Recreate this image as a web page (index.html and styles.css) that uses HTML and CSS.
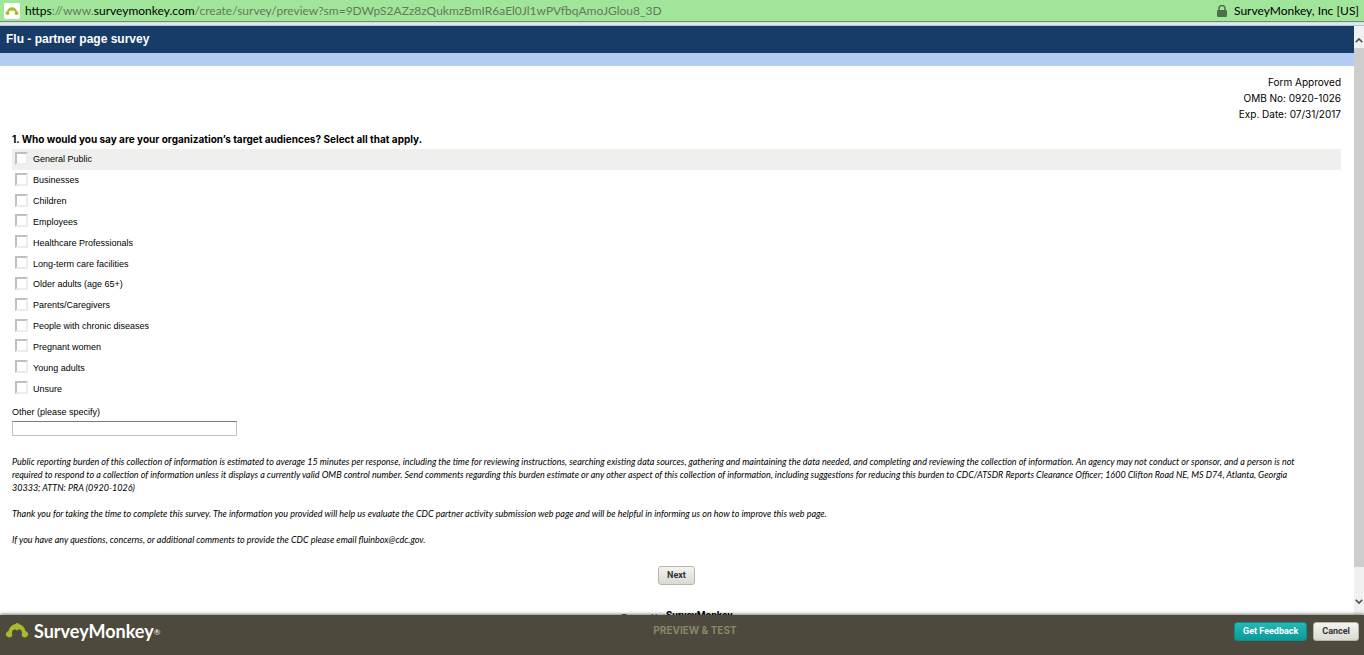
FILE: index.html
```html
<!DOCTYPE html>
<html lang="en">
<head>
    <meta charset="UTF-8">
    <meta name="viewport" content="width=device-width, initial-scale=1">
    <title>Flu - partner page survey</title>
    <link rel="stylesheet" href="styles.css">
</head>
<body>
<div class="address-bar">
    <span class="favicon">
        <svg viewBox="0 0 24 17" width="14" height="10"><path d="M3.500 9C4.500 4.500 8 2 12 2s7.500 2.500 8.500 7a3.300 3.300 0 1 1-3.500 5c-.6-1 0-1.800 0-3 0-2-1-3.500-2.700-3.500-1.100 0-1.800.5-2.300 1.300-.5-.8-1.200-1.300-2.300-1.300C8 7.500 7 9 7 11c0 1.200.6 2 0 3a3.300 3.300 0 1 1-3.500-5z" fill="#a5bd2c"/></svg>
    </span>
    <span class="url"><b>https</b>://www.<b>surveymonkey.com</b>/create/survey/preview?sm=9DWpS2AZz8zQukmzBmIR6aEl0Jl1wPVfbqAmoJGlou8_3D</span>
    <svg class="lock" viewBox="0 0 10 12" width="10" height="12"><path d="M2 6V3.500a3 3 0 0 1 6 0V6" fill="none" stroke="#4c7048" stroke-width="1.500"/><rect y="5" width="10" height="7" rx="1" fill="#4c7048"/></svg>
    <span class="owner">SurveyMonkey, Inc [US]</span>
</div>
<div class="viewport">
    <main class="page">
        <h1 class="survey-title">Flu - partner page survey</h1>
        <div class="band"></div>
        <form class="survey">
            <p class="approval">Form Approved<br>OMB No: 0920-1026<br>Exp. Date: 07/31/2017</p>
            <h2 class="question" id="q1">1. Who would you say are your organization’s target audiences? Select all that apply.</h2>
            <div class="options" role="group" aria-labelledby="q1">
                <label class="option active"><input type="checkbox">General Public</label>
                <label class="option"><input type="checkbox">Businesses</label>
                <label class="option"><input type="checkbox">Children</label>
                <label class="option"><input type="checkbox">Employees</label>
                <label class="option"><input type="checkbox">Healthcare Professionals</label>
                <label class="option"><input type="checkbox">Long-term care facilities</label>
                <label class="option"><input type="checkbox">Older adults (age 65+)</label>
                <label class="option"><input type="checkbox">Parents/Caregivers</label>
                <label class="option"><input type="checkbox">People with chronic diseases</label>
                <label class="option"><input type="checkbox">Pregnant women</label>
                <label class="option"><input type="checkbox">Young adults</label>
                <label class="option"><input type="checkbox">Unsure</label>
            </div>
            <label class="other-label" for="other">Other (please specify)</label>
            <input class="other" type="text" id="other">
            <div class="notice">
                <p>Public reporting burden of this collection of information is estimated to average 15 minutes per response, including the time for reviewing instructions, searching existing data sources, gathering and maintaining the data needed, and completing and reviewing the collection of information. An agency may not conduct or sponsor, and a person is not<br>required to respond to a collection of information unless it displays a currently valid OMB control number. Send comments regarding this burden estimate or any other aspect of this collection of information, including suggestions for reducing this burden to CDC/ATSDR Reports Clearance Officer; 1600 Clifton Road NE, MS D74, Atlanta, Georgia<br>30333; ATTN: PRA (0920-1026)</p>
                <p>Thank you for taking the time to complete this survey. The information you provided will help us evaluate the CDC partner activity submission web page and will be helpful in informing us on how to improve this web page.</p>
                <p>If you have any questions, concerns, or additional comments to provide the CDC please email fluinbox@cdc.gov.</p>
            </div>
            <button class="btn next" type="button">Next</button>
        </form>
        <p class="powered">Powered by <b>SurveyMonkey</b></p>
    </main>
    <div class="scrollbar">
        <svg viewBox="0 0 10 6" width="8" height="5"><path d="M1 5L5 1L9 5" fill="none" stroke="#505050" stroke-width="2"/></svg>
        <div class="thumb"></div>
        <svg viewBox="0 0 10 6" width="8" height="5"><path d="M1 1L5 5L9 1" fill="none" stroke="#505050" stroke-width="2"/></svg>
    </div>
</div>
<footer class="toolbar">
    <div class="brand">
        <svg viewBox="0 0 24 18" width="24" height="18"><path d="M3.500 9C4.500 5 7 2.600 10.500 2.100L11.500.8l.6.9L13.500.2v1.900c3.500.5 6 2.900 7 6.900a3.300 3.300 0 1 1-3.500 5c-.6-1 0-1.800 0-3 0-2-1-3.500-2.700-3.500-1.100 0-1.800.5-2.300 1.300-.5-.8-1.200-1.300-2.300-1.300C8 7.500 7 9 7 11c0 1.200.6 2 0 3a3.300 3.300 0 1 1-3.500-5z" fill="#a5bd2c"/></svg>
        <span>SurveyMonkey<small>®</small></span>
    </div>
    <span class="mode">PREVIEW &amp; TEST</span>
    <div class="actions">
        <button class="btn feedback" type="button">Get Feedback</button>
        <button class="btn" type="button">Cancel</button>
    </div>
</footer>
</body>
</html>
```
FILE: styles.css
```css
* {
    box-sizing: border-box;
}

body {
    margin: 0;
    height: 100vh;
    display: flex;
    flex-direction: column;
    background: #fff;
    color: #000;
    font: 9px/13px "Liberation Sans", Arial, sans-serif;
}

h1, h2, p {
    margin: 0;
}

.address-bar {
    flex: none;
    display: flex;
    align-items: center;
    height: 26px;
    padding: 0 5px 4px 4px;
    background: linear-gradient(#a0e599 21px, #77887a 21px 22px, #c5e9c8 22px 23px, #dce8f5 23px 25px, #b9c2cf 25px);
    font: 12px/18px Lato, "Noto Sans", sans-serif;
}

.favicon {
    display: flex;
    align-items: center;
    justify-content: center;
    width: 16px;
    height: 16px;
    margin-right: 5px;
    border-radius: 2px;
    background: #fff;
}

.url {
    flex: 1;
    color: #64785f;
    white-space: nowrap;
}

.url b {
    color: #000;
    font-weight: normal;
}

.lock {
    margin-right: 7px;
}

.viewport {
    flex: 1;
    min-height: 0;
    display: flex;
}

.page {
    flex: 1;
    min-width: 0;
    overflow: hidden;
}

.survey-title {
    padding: 0 6px;
    background: #183c68;
    color: #fff;
    font-size: 12px;
    line-height: 27px;
}

.band {
    height: 13px;
    background: #b3cdf2;
}

.survey {
    padding: 8px 13px 0 12px;
}

.approval {
    font-family: Inter, sans-serif;
    font-size: 10px;
    line-height: 16px;
    text-align: right;
}

.question {
    padding: 9px 0 2px;
    font-family: Inter, sans-serif;
    font-size: 10px;
    line-height: 16px;
}

.options {
    display: grid;
    grid-auto-rows: 1fr;
    height: 250px;
}

.option {
    display: flex;
    align-items: center;
    gap: 5px;
    padding: 1px 0 0 3px;
}

.option.active {
    background: #efefed;
}

.option input {
    appearance: none;
    width: 13px;
    height: 13px;
    margin: 0 0 3px;
    border: 2px solid #ececec;
    border-top-color: #c0c0c0;
    border-left-color: #c0c0c0;
    background: #fff;
}

.option input:checked {
    background: #555;
}

.other-label {
    display: block;
    padding-top: 7px;
}

.other {
    display: block;
    width: 225px;
    height: 15px;
    margin-top: 2px;
    padding: 0 2px;
    border: 1px solid #c4c4c4;
    border-top-color: #777;
    font: inherit;
}

.notice {
    display: grid;
    gap: 13px;
    margin-top: 19px;
    font-family: Lato, sans-serif;
    font-style: italic;
}

.btn {
    height: 19px;
    padding: 0 8px;
    border: 1px solid #b4b4ae;
    border-radius: 3px;
    background: linear-gradient(#f4f4f0, #d9dad0);
    color: #333;
    font: bold 9px/13px Roboto, "Liberation Sans", sans-serif;
}

.next {
    display: block;
    margin: 20px auto 0;
}

.powered {
    margin-top: 24px;
    font-size: 8px;
    text-align: center;
}

.powered b {
    font-family: Roboto, sans-serif;
    font-size: 10px;
}

.scrollbar {
    flex: none;
    display: flex;
    flex-direction: column;
    align-items: center;
    width: 10px;
    padding: 12px 0 11px;
    background: #f0f0f0;
}

.thumb {
    flex: 1;
    width: 100%;
    margin: 5px 0 32px;
    background: #cdcdcd;
}

.toolbar {
    flex: none;
    position: relative;
    display: grid;
    grid-template-columns: 1fr auto 1fr;
    height: 40px;
    padding: 7px 5px 0;
    background: #4d493c;
    box-shadow: 0 -1px 3px rgba(0, 0, 0, 0.5);
}

.brand {
    display: flex;
    gap: 5px;
    color: #fff;
    font: bold 18px/18px Lato, sans-serif;
}

.brand small {
    font-size: 8px;
    font-weight: normal;
    vertical-align: 3px;
    line-height: 1;
}

.mode {
    padding-left: 26px;
    color: #8a8668;
    font-family: Inter, sans-serif;
    font-size: 10px;
    font-weight: bold;
    line-height: 16px;
}

.actions {
    display: flex;
    justify-content: flex-end;
    gap: 6px;
}

.feedback {
    border-color: #0d8d8d;
    background: linear-gradient(#27b7b5, #0a9a9a);
    color: #fff;
}
```
